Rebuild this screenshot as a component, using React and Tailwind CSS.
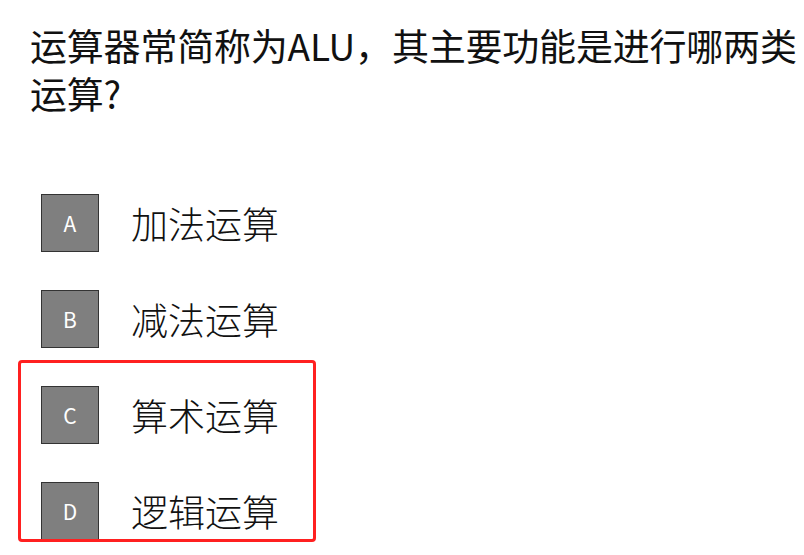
const options = [
  { key: 'A', text: '加法运算' },
  { key: 'B', text: '减法运算' },
  { key: 'C', text: '算术运算' },
  { key: 'D', text: '逻辑运算' },
];

// 选项行
function Option({ item }) {
  return (
    <div className="flex items-center h-[58px] pl-[41px] gap-[32px]">
      <div className="flex items-center justify-center w-[58px] h-[58px] bg-[#7f7f7f] border border-[#333] text-white text-[21px] leading-none">
        {item.key}
      </div>
      <span className="text-[37px] leading-none text-[#111] font-light">{item.text}</span>
    </div>
  );
}

export default function App() {
  return (
    <div
      className="relative w-[804px] h-[555px] overflow-hidden bg-white"
      style={{ fontFamily: '"Noto Sans CJK SC", "Noto Sans", sans-serif' }}
    >
      <p className="pl-[30px] pt-[21px] text-[37px] leading-[48px] text-[#111] tracking-[-0.2px]">
        运算器常简称为ALU，其主要功能是进行哪两类运算?
      </p>
      <div className="flex flex-col gap-[38px] mt-[77px]">
        {options.map((item) => (
          <Option key={item.key} item={item} />
        ))}
      </div>
      {/* 红色标注框 */}
      <div className="absolute left-[18px] top-[360px] w-[298px] h-[182px] border-[3px] border-[#ff2020] rounded-[4px]" />
    </div>
  );
}
